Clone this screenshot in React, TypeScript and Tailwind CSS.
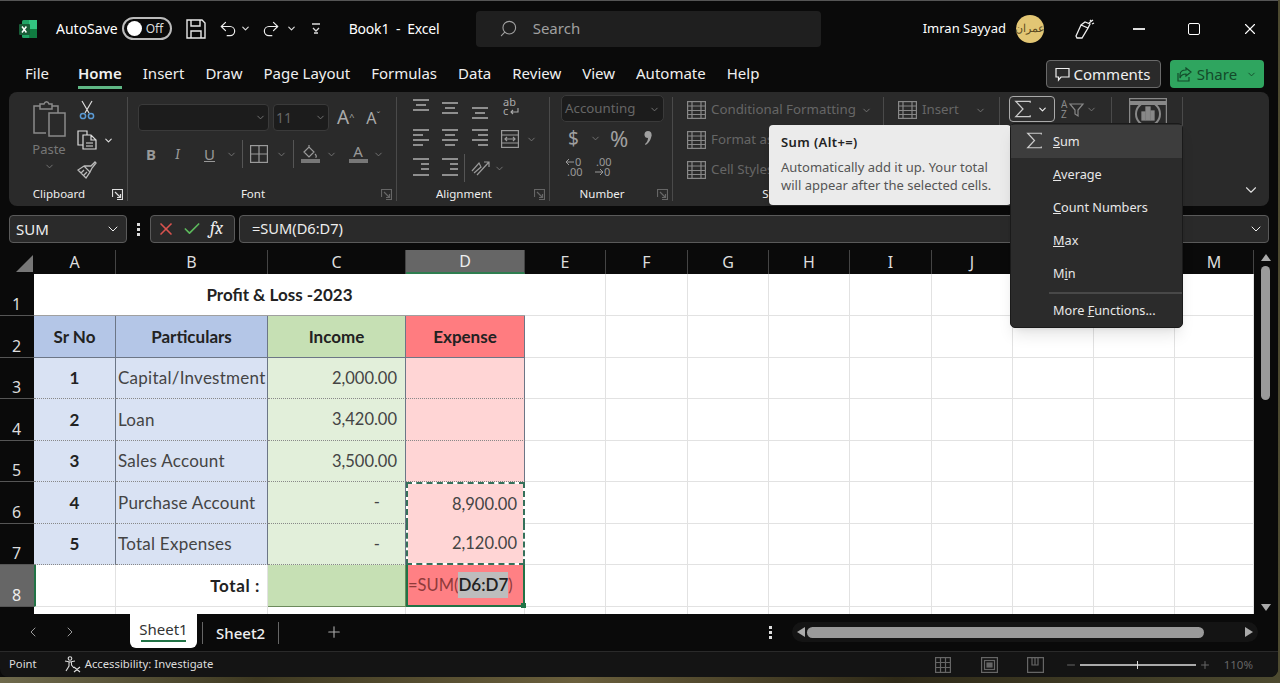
import { ChevronDown, ChevronLeft, ChevronRight, Redo2, Search, Undo2, X, Check, Plus, Minus } from "lucide-react"
import type { ReactNode } from "react"

const tabs = ["Home", "Insert", "Draw", "Page Layout", "Formulas", "Data", "Review", "View", "Automate", "Help"]
const columns = [
  { name: "A", className: "w-[82px]" },
  { name: "B", className: "w-[152px]" },
  { name: "C", className: "w-[138px]" },
  { name: "D", className: "w-[119px]" },
  { name: "E", className: "w-[81px]" },
  { name: "F", className: "w-[82px]" },
  { name: "G", className: "w-[81px]" },
  { name: "H", className: "w-[81px]" },
  { name: "I", className: "w-[82px]" },
  { name: "J", className: "w-[81px]" },
  { name: "K", className: "w-[81px]" },
  { name: "L", className: "w-[81px]" },
  { name: "M", className: "w-[79px]" },
]
const rowHeights = [42, 42, 41, 42, 41, 42, 41, 42, 41]
const rows = [
  { sr: "1", name: "Capital/Investment", income: "2,000.00", expense: "" },
  { sr: "2", name: "Loan", income: "3,420.00", expense: "" },
  { sr: "3", name: "Sales Account", income: "3,500.00", expense: "" },
  { sr: "4", name: "Purchase Account", income: "-", expense: "8,900.00" },
  { sr: "5", name: "Total Expenses", income: "-", expense: "2,120.00" },
]

function Chev({ className = "text-[#777]" }: { className?: string }) {
  return <ChevronDown size={11} strokeWidth={2} className={className} />
}

function Glyph({ w = 20, h = 20, children, className = "text-[#9a9a9a]" }: { w?: number; h?: number; children: ReactNode; className?: string }) {
  return (
    <svg width={w} height={h} viewBox={`0 0 ${w} ${h}`} fill="none" stroke="currentColor" strokeWidth="1.2" className={`shrink-0 ${className}`}>
      {children}
    </svg>
  )
}

// align icons: a stack of short bars
function Lines({ bars }: { bars: [number, number, number][] }) {
  return (
    <Glyph w={18} h={22} className="text-[#b0b0b0]">
      {bars.map(([y, a, b]) => (
        <line key={y} x1={a} x2={b} y1={y} y2={y} strokeWidth="1.5" />
      ))}
    </Glyph>
  )
}

function Launcher({ dim }: { dim?: boolean }) {
  return (
    <Glyph w={11} h={11} className={dim ? "text-[#666]" : "text-[#ddd]"}>
      <path d="M.5 8V.5H10.5V10.5H5" />
      <path d="M3 3L8.5 8.5M8.5 5V8.5H5" />
    </Glyph>
  )
}

function Group({ width, label, launcher, dim, children }: { width: string; label?: string; launcher?: boolean; dim?: boolean; children: ReactNode }) {
  return (
    <div className={`flex h-full shrink-0 flex-col border-r border-[#4a4a4a] ${width}`}>
      <div className="min-h-0 flex-1">{children}</div>
      <div className={`relative h-[14px] text-center text-[11.5px] leading-[14px] text-[#eee] ${launcher ? "pr-[18px]" : ""}`}>
        {label}
        {launcher && (
          <span className="absolute right-[4px] top-[2px]">
            <Launcher dim={dim} />
          </span>
        )}
      </div>
    </div>
  )
}

function ExcelLogo() {
  return (
    <svg width="20" height="20" viewBox="0 0 20 20" className="shrink-0">
      <rect x="4" y="1" width="15" height="18" rx="1.5" fill="#21a366" />
      <rect x="11" y="1" width="8" height="9" fill="#33c481" />
      <rect x="11" y="10" width="8" height="9" fill="#107c41" />
      <rect x="1" y="5" width="11" height="11" rx="1" fill="#185c37" />
      <path d="M4 7.5l4.4 6M8.4 7.5L4 13.5" stroke="#fff" strokeWidth="1.5" />
    </svg>
  )
}

function TitleBar() {
  return (
    <div className="flex h-[55px] shrink-0 items-center text-white">
      <div className="ml-[18px]">
        <ExcelLogo />
      </div>
      <span className="ml-[18px] shrink-0 text-[14px]">AutoSave</span>
      <div className="ml-[4px] flex h-[23px] w-[50px] shrink-0 items-center rounded-full border-2 border-[#bbb] px-[3px]">
        <span className="h-[15px] w-[15px] rounded-full bg-white" />
        <span className="ml-[4px] text-[12px] text-[#ddd]">Off</span>
      </div>
      <svg width="20" height="20" viewBox="0 0 20 20" fill="none" stroke="#e8e8e8" strokeWidth="1.4" className="ml-[14px] shrink-0">
        <path d="M1 1H16L19 4V19H1Z" />
        <path d="M5 1V7H14V1M5 19V12H15V19" />
      </svg>
      <Undo2 size={20} strokeWidth={1.4} className="ml-[12px] shrink-0 text-[#eee]" />
      <ChevronDown size={11} strokeWidth={2.5} className="ml-[2px] shrink-0 text-[#ddd]" />
      <Redo2 size={20} strokeWidth={1.4} className="ml-[10px] shrink-0 text-[#eee]" />
      <ChevronDown size={11} strokeWidth={2.5} className="ml-[5px] shrink-0 text-[#ddd]" />
      <svg width="10" height="11" viewBox="0 0 10 11" fill="none" stroke="#ddd" strokeWidth="1.3" className="ml-[14px] shrink-0">
        <path d="M1 1H9M2 5L5 8L8 5M3 10H7" />
      </svg>
      <span className="ml-[28px] w-[127px] shrink-0 whitespace-pre text-[14px] tracking-[-0.2px]">Book1  -  Excel</span>
      <div className="flex h-[36px] w-[345px] shrink-0 items-center rounded-[4px] bg-[#1f1f1f] pl-[23px] text-[#a0a0a0]">
        <Search size={19} strokeWidth={1.4} className="-scale-x-100" />
        <span className="ml-[15px] text-[15px]">Search</span>
      </div>
      <span className="ml-[102px] w-[83px] shrink-0 whitespace-nowrap text-[13px]">Imran Sayyad</span>
      <div className="ml-[10px] flex h-[28px] w-[28px] shrink-0 items-center justify-center rounded-full bg-[#e2c674] text-[11px] text-[#5a4a20]">عمران</div>
      <svg width="20" height="20" viewBox="0 0 20 20" fill="none" stroke="#eee" strokeWidth="1.3" className="ml-[31px] shrink-0">
        <path d="M1 17L6 6L13 9L7 19L2 19ZM6 6L10 3L15 5L13 9M15 2L16 1M17 5L19 4M14 4L18 1" />
      </svg>
      <div className="ml-[38px] h-[2px] w-[12px] shrink-0 bg-[#ddd]" />
      <div className="ml-[43px] h-[12px] w-[12px] shrink-0 rounded-[2px] border-[1.5px] border-white" />
      <X size={18} strokeWidth={1.5} className="ml-[41px] shrink-0" />
    </div>
  )
}

function TabBar() {
  return (
    <div className="flex h-[36px] shrink-0 items-start pl-[25px] text-[15px] text-[#f0f0f0]">
      <span className="mt-[6px] w-[53px]">File</span>
      <div className="flex gap-[21px]">
        {tabs.map((tab) => (
          <span key={tab} className={`mt-[6px] h-[27px] ${tab === "Home" ? "border-b-[3px] border-[#5fb785] font-semibold" : ""}`}>
            {tab}
          </span>
        ))}
      </div>
      <div className="ml-auto mr-[14px] mt-[4px] flex gap-[9px]">
        <div className="flex h-[28px] w-[115px] items-center justify-center gap-[4px] rounded-[4px] border border-[#6a6a6a] bg-[#2a2a2a] pr-[2px]">
          <svg width="15" height="15" viewBox="0 0 15 15" fill="none" stroke="#eee" strokeWidth="1.2">
            <path d="M1 1.5H14V10H6L3.5 13V10H1Z" />
          </svg>
          <span className="leading-[20px]">Comments</span>
        </div>
        <div className="flex h-[28px] w-[94px] items-center justify-center gap-[5px] rounded-[4px] bg-[#2fa55f] text-[#134a2a]">
          <svg width="15" height="15" viewBox="0 0 15 15" fill="none" stroke="#134a2a" strokeWidth="1.2">
            <path d="M9 1L14 5L9 9V7C6 7 4 8 3 11V8C3 5 5 3 9 3ZM1 6V14H12V10" />
          </svg>
          <span>Share</span>
          <ChevronDown size={11} strokeWidth={2} className="ml-[4px]" />
        </div>
      </div>
    </div>
  )
}

function ClipboardGroup() {
  return (
    <Group width="w-[119px]" label="Clipboard" launcher>
      <div className="flex">
        <div className="ml-[22px] flex w-[36px] flex-col items-center pt-[4px] text-[#777]">
          <svg width="33" height="36" viewBox="0 0 33 36" fill="none" stroke="#8a8a8a" strokeWidth="1.5">
            <path d="M13 32H1V5H7M19 5H25V12M7 8V3H11C12 0 15 0 16 3H19V8Z" />
            <rect x="16" y="12" width="16" height="23" />
          </svg>
          <span className="mt-[3px] text-[13px] leading-[18px]">Paste</span>
          <ChevronDown size={11} className="mt-[3px]" />
        </div>
        <div className="ml-[10px] flex flex-col gap-[10px] pt-[3px]">
          <svg width="16" height="20" viewBox="0 0 16 20" fill="none" stroke="#ddd" strokeWidth="1.2" className="ml-[2px]">
            <path d="M3 1L10 13M13 1L6 13" />
            <circle cx="4" cy="16" r="2.6" stroke="#5b9bd5" strokeWidth="1.5" />
            <circle cx="12" cy="16" r="2.6" stroke="#5b9bd5" strokeWidth="1.5" />
          </svg>
          <div className="flex items-center gap-[6px]">
            <svg width="20" height="20" viewBox="0 0 20 20" fill="none" stroke="#ddd" strokeWidth="1.2">
              <path d="M6 15H1V1H10V5M6 5H14L19 10V19H6ZM14 5V10H19M9 13H16M9 16H16" />
            </svg>
            <ChevronDown size={11} strokeWidth={2.5} className="text-[#ddd]" />
          </div>
          <svg width="20" height="19" viewBox="0 0 20 19" fill="none" stroke="#bbb" strokeWidth="1.3">
            <path d="M1 10L9 18L13 12L7 6ZM7 6L14 6L18 2L19 3L15 8L13 12M4 13L7 10M7 15L10 12" />
          </svg>
        </div>
      </div>
    </Group>
  )
}

function FontGroup() {
  return (
    <Group width="w-[269px]" label="Font" launcher dim>
      <div className="flex items-center pl-[10px] pt-[7px]">
        <div className="flex h-[27px] w-[131px] items-center justify-end rounded-[4px] border border-[#3a3a3a] bg-[#1c1c1c] pr-[2px]">
          <Chev />
        </div>
        <div className="ml-[4px] flex h-[27px] w-[56px] items-center justify-between rounded-[4px] border border-[#3a3a3a] bg-[#1c1c1c] px-[2px] text-[14px] text-[#666]">
          11
          <Chev />
        </div>
        <span className="ml-[8px] text-[19px] leading-none text-[#aaa]">
          A<sup className="text-[9px]">^</sup>
        </span>
        <span className="ml-[12px] text-[16px] leading-none text-[#aaa]">
          A<sup className="text-[9px]">ˇ</sup>
        </span>
      </div>
      <div className="mt-[9px] flex h-[28px] items-center pl-[18px] text-[15px] text-[#999]">
        <span className="w-[29px] font-bold">B</span>
        <span className="w-[29px] font-serif italic">I</span>
        <span className="w-[22px] underline">U</span>
        <Chev />
        <div className="ml-[5px] mr-[7px] h-[28px] w-px bg-[#555]" />
        <Glyph w={18} h={18}>
          <rect x=".6" y=".6" width="16.8" height="16.8" />
          <path d="M9 .6V17.4M.6 9H17.4" />
        </Glyph>
        <span className="ml-[8px]">
          <Chev />
        </span>
        <div className="mx-[6px] h-[28px] w-px bg-[#555]" />
        <div className="flex w-[20px] flex-col items-center">
          <Glyph w={16} h={13}>
            <path d="M2 7L7 2L12 7L7 12ZM7 2V0M13 9C14 10 15 12 13.5 12.5" />
          </Glyph>
          <div className="mt-px h-[4px] w-[19px] bg-[#777]" />
        </div>
        <span className="ml-[6px]">
          <Chev />
        </span>
        <div className="ml-[11px] flex w-[20px] flex-col items-center">
          <span className="text-[15px] leading-[13px]">A</span>
          <div className="mt-px h-[4px] w-[19px] bg-[#777]" />
        </div>
        <span className="ml-[5px]">
          <Chev />
        </span>
      </div>
    </Group>
  )
}

function AlignmentGroup() {
  return (
    <Group width="w-[153px]" label="Alignment" launcher dim>
      <div className="grid grid-cols-[29px_30px_30px_25px_20px] items-start pl-[15px]">
        <Lines bars={[[3, 1, 17], [8, 4, 14], [13, 1, 17]]} />
        <Lines bars={[[6, 1, 17], [11, 4, 14], [16, 1, 17]]} />
        <Lines bars={[[11, 1, 17], [16, 4, 14], [21, 1, 17]]} />
        <svg width="20" height="22" viewBox="0 0 20 22" fill="none" stroke="#aaa" strokeWidth="1.1">
          <text x="2" y="9" fontSize="11" fill="#aaa" stroke="none">ab</text>
          <text x="2" y="18" fontSize="11" fill="#aaa" stroke="none">c</text>
          <path d="M17 11V15H10M12 13L10 15L12 17" />
        </svg>
        <span />
      </div>
      <div className="mt-[9px] grid grid-cols-[29px_30px_30px_25px_20px] items-center pl-[15px]">
        <Lines bars={[[2, 1, 17], [7, 1, 11], [12, 1, 17], [17, 1, 11]]} />
        <Lines bars={[[2, 1, 17], [7, 4, 14], [12, 1, 17], [17, 4, 14]]} />
        <Lines bars={[[2, 1, 17], [7, 7, 17], [12, 1, 17], [17, 7, 17]]} />
        <Glyph w={18} h={18}>
          <rect x=".6" y=".6" width="16.8" height="16.8" />
          <path d="M.6 5H17.4M.6 13H17.4M4 9H14M6 7L4 9L6 11M12 7L14 9L12 11" />
        </Glyph>
        <Chev />
      </div>
      <div className="mt-[7px] flex h-[22px] items-center pl-[15px]">
        <span className="w-[29px]">
          <Lines bars={[[2, 1, 17], [7, 9, 17], [12, 9, 17], [18, 1, 17]]} />
        </span>
        <span className="w-[23px]">
          <Lines bars={[[2, 1, 17], [7, 9, 17], [12, 9, 17], [18, 1, 17]]} />
        </span>
        <div className="h-[28px] w-px bg-[#555]" />
        <span className="ml-[6px]">
          <Glyph w={20} h={18}>
            <path d="M1 12L8 4L10 8L3 14M6 16L18 3M13 3H18V8" />
          </Glyph>
        </span>
        <span className="ml-[3px]">
          <Chev />
        </span>
      </div>
    </Group>
  )
}

function NumberGroup() {
  return (
    <Group width="w-[123px]" label="Number" launcher dim>
      <div className="-mt-[2px] ml-[11px] flex h-[27px] w-[103px] items-center justify-between rounded-[5px] border border-[#3a3a3a] bg-[#1c1c1c] px-[3px] pt-px text-[13.3px] text-[#666]">
        Accounting
        <Chev />
      </div>
      <div className="mt-[2px] flex h-[28px] items-center pl-[18px] text-[#a0a0a0]">
        <span className="text-[19px]">$</span>
        <span className="ml-[11px]">
          <Chev />
        </span>
        <span className="ml-[9px] text-[22px]">%</span>
        <svg width="8" height="16" viewBox="0 0 8 16" fill="#a0a0a0" className="ml-[16px]">
          <circle cx="4" cy="4.5" r="3.5" />
          <path d="M7.5 4.5C7.5 9 5 13 1.5 15L1 14C3 12.5 4 10 4 8Z" />
        </svg>
      </div>
      <div className="mt-[5px] flex gap-[11px] pl-[15px]">
        <svg width="18" height="20" viewBox="0 0 18 20" fill="none" stroke="#999" strokeWidth="1">
          <path d="M1 5H9M4 2L1 5L4 8" />
          <text x="10" y="9" fontSize="11" fill="#999" stroke="none">0</text>
          <text x="2" y="19" fontSize="11" fill="#999" stroke="none">.00</text>
        </svg>
        <svg width="18" height="20" viewBox="0 0 18 20" fill="none" stroke="#999" strokeWidth="1">
          <text x="2" y="9" fontSize="11" fill="#999" stroke="none">.00</text>
          <path d="M1 15H9M6 12L9 15L6 18" />
          <text x="10" y="19" fontSize="11" fill="#999" stroke="none">0</text>
        </svg>
      </div>
    </Group>
  )
}

function StyleRow({ label, chevron, children }: { label: string; chevron?: boolean; children: ReactNode }) {
  return (
    <div className="flex h-[30px] items-center gap-[5px] pl-[14px] text-[13.3px] text-[#666]">
      {children}
      <span className="whitespace-nowrap">{label}</span>
      {chevron && <Chev />}
    </div>
  )
}

function TableGlyph() {
  return (
    <Glyph w={19} h={18} className="text-[#888]">
      <rect x=".6" y=".6" width="17.8" height="16.8" />
      <path d="M.6 5H18.4M.6 9.5H18.4M.6 13.5H18.4M5 .6V17.4M14 .6V17.4" />
    </Glyph>
  )
}

function StylesGroup() {
  return (
    <Group width="w-[211px]" label="Styles">
      <div className="-mt-[2px]">
        <StyleRow label="Conditional Formatting" chevron>
          <TableGlyph />
        </StyleRow>
        <StyleRow label="Format as Table">
          <TableGlyph />
        </StyleRow>
        <StyleRow label="Cell Styles">
          <TableGlyph />
        </StyleRow>
      </div>
    </Group>
  )
}

function CellsGroup() {
  return (
    <Group width="w-[116px]">
      <div className="-mt-[2px]">
        <div className="flex h-[30px] items-center pl-[14px] text-[13.3px] text-[#666]">
          <TableGlyph />
          <span className="ml-[5px]">Insert</span>
          <span className="ml-[16px]">
            <Chev />
          </span>
        </div>
      </div>
    </Group>
  )
}

function SigmaIcon({ size = 20 }: { size?: number }) {
  return (
    <svg width={size} height={size} viewBox="0 0 20 20" fill="none" stroke="#ccc" strokeWidth="1.4" className="shrink-0">
      <path d="M18 3V1.5H2L10 10L2 18.5H18V17" />
    </svg>
  )
}

function EditingGroup() {
  return (
    <Group width="w-[112px]">
      <div className="-mt-[1px] flex items-center pl-[9px]">
        <div className="flex h-[26px] w-[46px] items-center gap-[5px] rounded-[4px] border border-[#aaa] bg-[#2f2f2f] pl-[4px]">
          <SigmaIcon size={18} />
          <ChevronDown size={11} strokeWidth={2.5} className="text-[#eee]" />
        </div>
        <svg width="24" height="22" viewBox="0 0 24 22" fill="none" stroke="#888" strokeWidth="1.2" className="ml-[6px]">
          <text x="0" y="10" fontSize="10" fill="#888" stroke="none">A</text>
          <text x="0" y="20" fontSize="10" fill="#888" stroke="none">Z</text>
          <path d="M9 6H22L17 12V18L14 16V12Z" />
        </svg>
        <span className="ml-[1px]">
          <Chev />
        </span>
      </div>
    </Group>
  )
}

function AnalysisGroup() {
  return (
    <Group width="w-[71px]">
      <div className="flex justify-center pl-[2px] pt-[1px]">
        <svg width="38" height="26" viewBox="0 0 38 26" fill="none" stroke="#888" strokeWidth="1.3">
          <rect x=".6" y=".6" width="36.8" height="30" />
          <path d="M.6 5H37.4" strokeWidth="4" />
          <circle cx="19" cy="16" r="12" strokeWidth="2" />
          <rect x="13" y="14" width="3" height="8" fill="#888" />
          <rect x="17" y="9" width="4" height="13" fill="#888" />
          <rect x="22" y="13" width="3" height="9" fill="#888" />
        </svg>
      </div>
    </Group>
  )
}

function Ribbon() {
  return (
    <div className="mx-[9px] flex h-[114px] shrink-0 items-stretch rounded-lg bg-[#2a2a2a] py-[5px]">
      <ClipboardGroup />
      <FontGroup />
      <AlignmentGroup />
      <NumberGroup />
      <StylesGroup />
      <CellsGroup />
      <EditingGroup />
      <AnalysisGroup />
      <div className="flex flex-1 items-end justify-end pb-[2px] pr-[9px]">
        <ChevronDown size={18} strokeWidth={1.5} className="text-[#ddd]" />
      </div>
    </div>
  )
}

function FormulaBar() {
  return (
    <div className="mx-[9px] mt-[9px] flex h-[28px] shrink-0 items-center text-[#eee]">
      <div className="flex h-full w-[118px] items-center justify-between rounded-[4px] border border-[#5a5a5a] bg-[#2a2a2a] pl-[6px] pr-[5px] text-[15px]">
        SUM
        <ChevronDown size={16} strokeWidth={1.5} />
      </div>
      <div className="mx-[10px] flex w-[3px] flex-col gap-[2px]">
        <span className="h-[3px] w-[3px] bg-[#ddd]" />
        <span className="h-[3px] w-[3px] bg-[#ddd]" />
        <span className="h-[3px] w-[3px] bg-[#ddd]" />
      </div>
      <div className="flex h-full w-[85px] items-center rounded-[4px] border border-[#5a5a5a] bg-[#2a2a2a] pl-[5px]">
        <X size={20} strokeWidth={2} className="text-[#d9534f]" />
        <Check size={20} strokeWidth={2} className="ml-[6px] text-[#5cb85c]" />
        <span className="ml-[8px] font-serif text-[18px] italic leading-none">fx</span>
      </div>
      <div className="ml-[4px] flex h-full flex-1 items-center justify-between rounded-[4px] border border-[#5a5a5a] bg-[#2a2a2a] pl-[12px] pr-[4px] text-[14.6px]">
        =SUM(D6:D7)
        <ChevronDown size={16} strokeWidth={1.5} />
      </div>
    </div>
  )
}

function ColumnHeaders() {
  return (
    <div className="mt-[7px] flex h-[24px] shrink-0 text-[16px] text-[#ddd]">
      <div className="flex w-[34px] items-end justify-end pb-[2px] pr-px">
        <div className="h-0 w-0 border-b-[17px] border-l-[17px] border-b-[#777] border-l-transparent" />
      </div>
      {columns.map((col) => (
        <div
          key={col.name}
          className={`flex items-center justify-center border-r border-[#444] ${col.className} ${col.name === "D" ? "border-b-2 border-b-[#2e7d4f] bg-[#666] text-[#eee]" : ""}`}
        >
          {col.name}
        </div>
      ))}
    </div>
  )
}

function RowHeaders() {
  return (
    <div className="h-[340px] w-[34px] shrink-0 overflow-hidden text-[16px] text-[#ddd]">
      {rowHeights.map((h, i) => (
        <div
          key={i}
          style={{ height: h }}
          className={`flex items-end justify-center border-b border-[#555] pr-px leading-[21px] ${i === 7 ? "bg-[#666] text-[#eee]" : ""}`}
        >
          {i < 8 ? i + 1 : null}
        </div>
      ))}
    </div>
  )
}

const blue = "border-r border-[#6c7686] bg-[#d9e2f3]"
const green = "border-r border-[#6c7686] bg-[#e2efda]"
const red = "border-r border-[#6c7686] bg-[#ffd5d5]"
const dotted = "[border-bottom-style:dotted] border-b-[#888]"

function Sheet() {
  return (
    <div className="h-[340px] flex-1 overflow-hidden bg-white font-['Lato',sans-serif] text-[17px] text-[#444]">
      <div
        className="grid grid-cols-[82px_152px_138px_119px_81px_82px_81px_81px_82px_81px_81px_81px_79px]"
        style={{ gridTemplateRows: rowHeights.map((h) => `${h}px`).join(" ") }}
      >
        {/* title row */}
        <div className="col-span-4 flex items-center justify-center border-b border-[#a0a0a0] text-[17px] font-bold text-[#222]">Profit &amp; Loss -2023</div>
        {Array.from({ length: 9 }).map((_, i) => (
          <div key={`t${i}`} className="border-b border-r border-[#e2e2e2]" />
        ))}
        {/* header row */}
        <div className="flex items-center justify-center border-b border-r border-[#6c7686] bg-[#b4c6e7] font-bold text-[#222]">Sr No</div>
        <div className="flex items-center justify-center border-b border-r border-[#6c7686] bg-[#b4c6e7] font-bold text-[#222]">Particulars</div>
        <div className="flex items-center justify-center border-b border-r border-[#6c7686] bg-[#c6e0b4] font-bold text-[#222]">Income</div>
        <div className="flex items-center justify-center border-b border-r border-[#6c7686] bg-[#ff7c80] font-bold text-[#222]">Expense</div>
        {Array.from({ length: 9 }).map((_, i) => (
          <div key={`h${i}`} className="border-b border-r border-[#e2e2e2]" />
        ))}
        {/* data rows */}
        {rows.map((row, r) => (
          <div key={row.sr} className="contents">
            <div className={`flex items-center justify-center border-b font-bold text-[#222] ${blue} ${dotted}`}>{row.sr}</div>
            <div className={`flex items-center whitespace-nowrap border-b pl-[2px] tracking-[0.25px] ${blue} ${dotted}`}>{row.name}</div>
            <div className={`flex items-center justify-end border-b pr-[8px] text-[16.5px] ${green} ${dotted}`}>
              {row.income === "-" ? <span className="pr-[17px]">-</span> : row.income}
            </div>
            {r === 3 ? (
              <div className="flex items-center justify-end border-x-2 border-t-2 border-dashed border-[#35705a] bg-[#ffd5d5] bg-clip-padding pr-[6px] text-[16.5px]">{row.expense}</div>
            ) : r === 4 ? (
              <div className="flex items-center justify-end border-x-2 border-b-2 border-dashed border-[#35705a] bg-[#ffd5d5] bg-clip-padding pr-[6px] text-[16.5px]">{row.expense}</div>
            ) : (
              <div className={`border-b ${red} ${dotted}`} />
            )}
            {Array.from({ length: 9 }).map((_, i) => (
              <div key={i} className="border-b border-r border-[#e2e2e2]" />
            ))}
          </div>
        ))}
        {/* total row */}
        <div className="border-b border-r border-l-2 border-[#e2e2e2] border-l-[#217346]" />
        <div className="flex items-center justify-end border-b border-r border-[#e2e2e2] pr-[7px] font-bold tracking-[0.6px] text-[#222]">Total :</div>
        <div className="border-b border-r border-[#6c8a5c] bg-[#c6e0b4]" />
        <div className="relative flex items-center whitespace-nowrap border-x-2 border-b-2 border-[#217346] bg-[#ff8084] text-[16.5px] text-[#8f3a3a]">
          =SUM(<span className="bg-[#bdbdbd] text-[17px] font-semibold text-[#222]">D6:D7</span>)
          <span className="absolute -bottom-[3px] -right-[3px] h-[5px] w-[5px] bg-[#217346]" />
        </div>
        {Array.from({ length: 9 }).map((_, i) => (
          <div key={`x${i}`} className="border-b border-r border-[#e2e2e2]" />
        ))}
        {Array.from({ length: 13 }).map((_, i) => (
          <div key={`y${i}`} className="border-r border-[#e2e2e2]" />
        ))}
      </div>
    </div>
  )
}

function VerticalScroll() {
  return (
    <div className="-mt-[24px] flex w-[24px] shrink-0 flex-col items-center pr-px pt-[4px]">
      <div className="h-0 w-0 border-x-[5px] border-b-[7px] border-x-transparent border-b-[#aaa]" />
      <div className="mt-[5px] h-[134px] w-[9px] rounded-full bg-[#9a9a9a]" />
      <div className="mb-[3px] mt-auto h-0 w-0 border-x-[5px] border-t-[7px] border-x-transparent border-t-[#aaa]" />
    </div>
  )
}

function SheetTabs() {
  return (
    <div className="flex h-[37px] shrink-0 items-start text-[#eee]">
      <ChevronLeft size={16} strokeWidth={1.5} className="ml-[25px] mt-[10px] text-[#999]" />
      <ChevronRight size={16} strokeWidth={1.5} className="ml-[21px] mt-[10px] text-[#999]" />
      <div className="ml-[52px] flex h-[34px] w-[67px] flex-col items-center rounded-b-[6px] bg-white pt-[4px] text-[15px] leading-[22px] text-[#333]">
        Sheet1
        <div className="h-[2px] w-[45px] bg-[#217346]" />
      </div>
      <div className="ml-[5px] mt-[8px] h-[22px] w-px bg-[#666]" />
      <span className="ml-[13px] mt-[8px] text-[15px] font-medium">Sheet2</span>
      <div className="ml-[13px] mt-[8px] h-[22px] w-px bg-[#666]" />
      <Plus size={18} strokeWidth={1.5} className="ml-[46px] mt-[9px] text-[#aaa]" />
      <div className="ml-[426px] mt-[12px] flex w-[3px] flex-col gap-[2px]">
        <span className="h-[3px] w-[3px] bg-[#ddd]" />
        <span className="h-[3px] w-[3px] bg-[#ddd]" />
        <span className="h-[3px] w-[3px] bg-[#ddd]" />
      </div>
      <div className="ml-[20px] mt-[8px] flex h-[20px] w-[466px] items-center rounded-full bg-[#141414] px-[5px]">
        <div className="h-0 w-0 border-y-[5px] border-r-[8px] border-y-transparent border-r-[#aaa]" />
        <div className="ml-[2px] h-[11px] w-[397px] rounded-full bg-[#9a9a9a]" />
        <div className="ml-auto h-0 w-0 border-y-[5px] border-l-[8px] border-y-transparent border-l-[#aaa]" />
      </div>
    </div>
  )
}

function StatusBar() {
  return (
    <div className="flex h-[26px] shrink-0 items-center rounded-b-lg border-t border-[#2a2a2a] bg-[#141414] text-[11.3px] text-[#ddd]">
      <span className="ml-[9px]">Point</span>
      <svg width="17" height="17" viewBox="0 0 17 17" fill="none" stroke="#ddd" strokeWidth="1.1" className="ml-[27px]">
        <circle cx="6" cy="2.5" r="1.8" />
        <path d="M1 5L6 6L11 5M5 6V10L2 15M7.5 6V9L10 12M10 11L16 16M16 11L10 16" />
      </svg>
      <span className="ml-[4px] w-[850px]">Accessibility: Investigate</span>
      <Glyph w={16} h={16} className="text-[#666]">
        <rect x=".6" y=".6" width="14.8" height="14.8" />
        <path d="M5.5 .6V15.4M10.5 .6V15.4M.6 5.5H15.4M.6 10.5H15.4" />
      </Glyph>
      <span className="ml-[30px]">
        <Glyph w={17} h={16} className="text-[#666]">
          <rect x=".6" y=".6" width="15.8" height="14.8" />
          <rect x="3.5" y="3.5" width="10" height="9" />
          <rect x="6" y="6" width="5" height="4" fill="#666" />
        </Glyph>
      </span>
      <span className="ml-[29px]">
        <Glyph w={17} h={16} className="text-[#666]">
          <path d="M.6 .6H16.4V15.4H.6ZM5 .6V8H11V.6M8 .6V8" />
        </Glyph>
      </span>
      <Minus size={12} className="ml-[21px] text-[#666]" />
      <div className="relative ml-[3px] h-[2px] w-[116px] bg-[#aaa]">
        <span className="absolute -top-[3px] left-[57px] h-[8px] w-px bg-[#ddd]" />
      </div>
      <Plus size={12} className="ml-[3px] text-[#666]" />
      <span className="ml-[13px] text-[11.5px] text-[#666]">110%</span>
    </div>
  )
}

function Tooltip() {
  return (
    <div className="absolute left-[769px] top-[125px] h-[80px] w-[242px] rounded-[4px] bg-[#ebebeb] px-[12px] pt-[8px] text-[13px] leading-[18px] text-[#555] shadow-md">
      <div className="mb-[7px] font-semibold tracking-[0.4px] text-[#222]">Sum (Alt+=)</div>
      Automatically add it up. Your total
      <br />
      will appear after the selected cells.
    </div>
  )
}

function MenuItem({ pre = "", mark, post, hover }: { pre?: string; mark: string; post: string; hover?: boolean }) {
  return (
    <div className={`flex h-[33px] items-center pl-[42px] ${hover ? "bg-[#3d3d3d]" : ""}`}>
      <span>
        {pre}
        <span className="underline">{mark}</span>
        {post}
      </span>
    </div>
  )
}

function AutoSumMenu() {
  return (
    <div className="absolute left-[1010px] top-[123px] h-[205px] w-[173px] rounded-[5px] border border-[#1a1a1a] bg-[#2b2b2b] py-px text-[12.7px] text-[#e8e8e8] shadow-lg">
      <div className="relative">
        <MenuItem mark="S" post="um" hover />
        <span className="absolute left-[15px] top-[7px]">
          <SigmaIcon size={17} />
        </span>
      </div>
      <MenuItem mark="A" post="verage" />
      <MenuItem mark="C" post="ount Numbers" />
      <MenuItem mark="M" post="ax" />
      <MenuItem pre="M" mark="i" post="n" />
      <div className="ml-[38px] mt-[2px] h-[2px] bg-[#484848]" />
      <MenuItem pre="More " mark="F" post="unctions..." />
    </div>
  )
}

export default function App() {
  return (
    <div className="relative h-[683px] w-[1280px] overflow-hidden bg-[linear-gradient(90deg,#6f6a4c,#3f3a22_20%,#6a5f3c_45%,#2f2a18_70%,#4d4a30)] font-['Noto_Sans',sans-serif]">
      <div className="flex h-[677px] w-[1278px] flex-col rounded-br-lg border-t border-[#555] bg-[#0a0a0a]">
        <TitleBar />
        <TabBar />
        <Ribbon />
        <FormulaBar />
        <ColumnHeaders />
        <div className="flex h-[340px] shrink-0">
          <RowHeaders />
          <Sheet />
          <VerticalScroll />
        </div>
        <SheetTabs />
        <StatusBar />
      </div>
      <Tooltip />
      <AutoSumMenu />
    </div>
  )
}
